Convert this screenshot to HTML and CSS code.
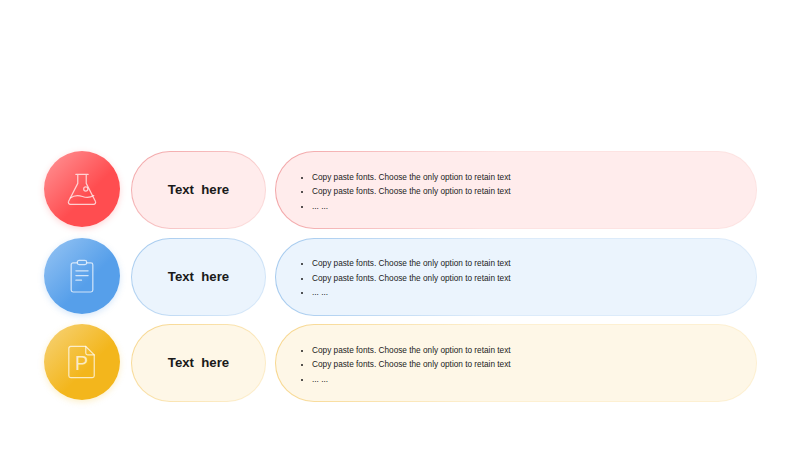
FILE: index.html
```html
<!DOCTYPE html>
<html lang="en">
<head>
<meta charset="utf-8">
<title>Text here</title>
<link rel="stylesheet" href="styles.css">
</head>
<body>
<main class="rows">
  <section class="row red">
    <div class="badge">
      <svg class="icon" viewBox="0 0 34 36" fill="none" stroke="currentColor" stroke-width="1.300" stroke-linecap="round" stroke-linejoin="round">
        <path d="M10.500 2.500h13M12.500 2.500v9.500L2.800 31a2.200 2.200 0 0 0 2 3.300h24.400a2.200 2.200 0 0 0 2-3.300L21.500 12V2.500"/>
        <path d="M4.500 27.500c5-3.500 9-3 13-1.500s8 1.500 12-1"/>
        <circle cx="21" cy="18" r="2.200"/>
      </svg>
    </div>
    <div class="pill title"><span class="title-text">Text  here</span></div>
    <div class="pill body">
      <ul class="list">
        <li>Copy paste fonts. Choose the only option to retain text</li>
        <li>Copy paste fonts. Choose the only option to retain text</li>
        <li>... ...</li>
      </ul>
    </div>
  </section>
  <section class="row blue">
    <div class="badge">
      <svg class="icon" viewBox="0 0 34 36" fill="none" stroke="currentColor" stroke-width="1.300" stroke-linecap="round" stroke-linejoin="round">
        <path d="M12 4H7.500a2 2 0 0 0-2 2v27a2 2 0 0 0 2 2h19a2 2 0 0 0 2-2V6a2 2 0 0 0-2-2H22"/>
        <rect x="12" y="1.500" width="10" height="4.500" rx="2"/>
        <path d="M10.500 12.500h13M10.500 17.500h13M10.500 22.500h6"/>
      </svg>
    </div>
    <div class="pill title"><span class="title-text">Text  here</span></div>
    <div class="pill body">
      <ul class="list">
        <li>Copy paste fonts. Choose the only option to retain text</li>
        <li>Copy paste fonts. Choose the only option to retain text</li>
        <li>... ...</li>
      </ul>
    </div>
  </section>
  <section class="row yellow">
    <div class="badge">
      <svg class="icon" viewBox="0 0 34 36" fill="none" stroke="currentColor" stroke-width="1.300" stroke-linecap="round" stroke-linejoin="round">
        <path d="M21 1.500H5a2 2 0 0 0-2 2v29a2 2 0 0 0 2 2h23a2 2 0 0 0 2-2V10.500z"/>
        <path d="M21 1.500v7a2 2 0 0 0 2 2h7"/>
        <text class="icon-letter" x="16.500" y="27" text-anchor="middle">P</text>
      </svg>
    </div>
    <div class="pill title"><span class="title-text">Text  here</span></div>
    <div class="pill body">
      <ul class="list">
        <li>Copy paste fonts. Choose the only option to retain text</li>
        <li>Copy paste fonts. Choose the only option to retain text</li>
        <li>... ...</li>
      </ul>
    </div>
  </section>
</main>
</body>
</html>
```
FILE: styles.css
```css
* { box-sizing: border-box; }
html, body { margin: 0; height: 100%; background: #fff; }
body { overflow: hidden; font-family: "Liberation Sans", Arial, sans-serif; color: #111; }

.rows {
  display: flex;
  flex-direction: column;
  gap: 8.500px;
  padding: 151px 43px 0 44px;
}
.row {
  display: grid;
  grid-template-columns: 76px 146px 491px;
  height: 78px;
  align-items: start;
}
.row > .title { margin-left: 11px; }
.row > .body { margin-left: 9px; }

.red    { --light: #ff8d8f; --deep: #ff4d50; --glow: rgba(255,90,95,.25); --fill: #ffecec; --edge: #f2a3a5; --edge2: #fde3e2; }
.blue   { --light: #8fc0f2; --deep: #569fea; --glow: rgba(90,160,235,.25); --fill: #ebf4fd; --edge: #a3c9ee; --edge2: #dcebfa; }
.yellow { --light: #f6d06f; --deep: #f3b61c; --glow: rgba(245,190,40,.25); --fill: #fef7e7; --edge: #f7d68c; --edge2: #fdf0d2; }

.badge {
  width: 76px;
  height: 76px;
  border-radius: 50%;
  display: flex;
  align-items: center;
  justify-content: center;
  color: rgba(255,255,255,.72);
  background: linear-gradient(135deg, var(--light) 8%, var(--deep) 58%);
  box-shadow: 0 2px 6px var(--glow);
}
.icon { width: 32px; height: 34px; overflow: visible; }
.icon-letter {
  font-family: "Liberation Sans", Arial, sans-serif;
  font-size: 21px;
  fill: currentColor;
  stroke: none;
}

.pill {
  height: 78px;
  border-radius: 39px;
  border: 1px solid transparent;
  display: flex;
  align-items: center;
}
.title {
  justify-content: center;
  padding-bottom: 1px;
  background:
    linear-gradient(var(--fill), var(--fill)) padding-box,
    linear-gradient(135deg, var(--edge), var(--edge2)) border-box;
}
.title-text {
  white-space: pre;
  font-family: "Liberation Sans", Arial, sans-serif;
  font-weight: 700;
  font-size: 13.200px;
  color: #1a1a1a;
}
.body {
  background:
    linear-gradient(var(--fill), var(--fill)) padding-box,
    linear-gradient(100deg, var(--edge) 0%, var(--edge2) 45%, var(--edge2) 100%) border-box;
}
.list {
  margin: 0;
  padding: 5px 0 0 36px;
  list-style: disc;
  font-size: 8.250px;
  line-height: 14.500px;
  color: #1c1c1c;
}
.list li::marker { font-size: 6.500px; }
```
